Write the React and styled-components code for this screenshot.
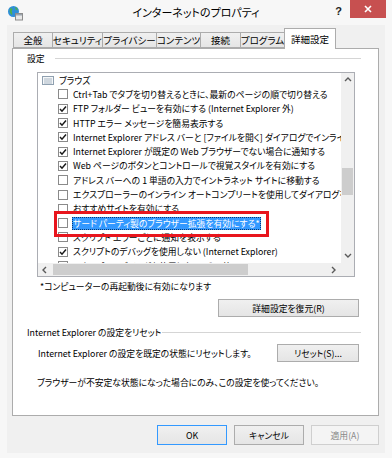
import React from "react";
import styled, { createGlobalStyle } from "styled-components";

const FONT = `"Noto Sans CJK JP", "Noto Sans", sans-serif`;

const Global = createGlobalStyle`
  html, body { margin: 0; padding: 0; background: #f7f7f7; }
  body {
    font-family: ${FONT};
    font-size: 8.8px;
    color: #000;
    font-feature-settings: "palt";
  }
  * { box-sizing: border-box; }
`;

const Window = styled.div`
  width: 392px;
  height: 458px;
  display: flex;
  flex-direction: column;
  background: #f7f7f7;
  overflow: hidden;
`;

const TitleBar = styled.div`
  height: 25px;
  flex: none;
  display: grid;
  grid-template-columns: 1fr auto 1fr;
  align-items: start;
`;

const IconSlot = styled.div`
  padding: 5px 0 0 7px;
  line-height: 0;
`;

const Title = styled.div`
  font-size: 11px;
  line-height: 25px;
`;

const Controls = styled.div`
  justify-self: end;
  display: flex;
  align-items: flex-start;
  margin-right: 6px;
`;

const Help = styled.div`
  font-family: "Liberation Sans", sans-serif;
  font-weight: bold;
  font-size: 11px;
  line-height: 11px;
  margin: 6px 8px 0 0;
  color: #222;
`;

const Close = styled.div`
  width: 36px;
  height: 18px;
  background: #c75050;
  display: flex;
  align-items: center;
  justify-content: center;
`;

const Client = styled.div`
  flex: 1;
  margin: 0 7px 5px 7px;
  background: #f0f0f0;
  padding: 3px 6px 0 5px;
  display: flex;
  flex-direction: column;
`;

const TabStrip = styled.div`
  display: flex;
  align-items: flex-end;
  height: 20px;
  padding-left: 1px;
  position: relative;
  z-index: 1;
`;

const Tab = styled.div`
  width: ${(p) => p.$w}px;
  height: ${(p) => (p.$active ? 21 : 16)}px;
  margin-left: ${(p) => (p.$first ? 0 : -1)}px;
  margin-bottom: ${(p) => (p.$active ? -1 : 0)}px;
  border: 1px solid #acacac;
  border-bottom: ${(p) => (p.$active ? "none" : "1px solid #acacac")};
  background: ${(p) =>
    p.$active ? "#fff" : "linear-gradient(#f0f0f0, #e5e5e5)"};
  display: flex;
  align-items: center;
  justify-content: center;
  padding-bottom: ${(p) => (p.$active ? 1 : 0)}px;
  white-space: nowrap;
  font-size: 9.5px;
  position: relative;
  z-index: ${(p) => (p.$active ? 2 : 1)};
`;

const Panel = styled.div`
  height: 368px;
  flex: none;
  background: #fff;
  border: 1px solid #acacac;
  display: flex;
  flex-direction: column;
`;

const GroupHeader = styled.div`
  display: flex;
  align-items: center;
  gap: ${(p) => p.$gap}px;
  height: 12px;
  margin: ${(p) => p.$mt}px 17px 0 14px;
  white-space: nowrap;
`;

const GroupLine = styled.div`
  flex: 1;
  height: 1px;
  background: #d5d5d5;
`;

const ListBox = styled.div`
  position: relative;
  margin: 8px 0 0 24px;
  width: 318px;
  height: 205px;
  border: 1px solid #abadb3;
  display: grid;
  grid-template-columns: 1fr 13px;
  grid-template-rows: 1fr 13px;
`;

const ListContent = styled.div`
  overflow: hidden;
`;

const Row = styled.div`
  height: 14.3px;
  display: flex;
  align-items: center;
  gap: 5px;
  padding-left: ${(p) => (p.$header ? 4 : 20)}px;
  white-space: nowrap;
`;

const Check = styled.div`
  width: 10px;
  height: 10px;
  flex: none;
  border: 1px solid #8a8a8a;
  background: #fff;
  display: flex;
  align-items: center;
  justify-content: center;
`;

const ItemText = styled.span`
  line-height: 13px;
  height: 13px;
  padding: 0 1px;
  margin-left: -1px;
  ${(p) =>
    p.$selected &&
    `
    background: #3399ff;
    color: #fff;
    outline: 1px dotted #0b3a70;
    outline-offset: -1px;
  `}
`;

const VScroll = styled.div`
  background: #f0f0f0;
  display: flex;
  flex-direction: column;
  align-items: center;
`;

const HScroll = styled.div`
  background: #f0f0f0;
  display: flex;
  align-items: center;
`;

const Corner = styled.div`
  background: #f0f0f0;
`;

const ArrowBox = styled.div`
  flex: none;
  width: ${(p) => (p.$h ? 14 : 13)}px;
  height: ${(p) => (p.$h ? 13 : 14)}px;
  display: flex;
  align-items: center;
  justify-content: center;
`;

const Track = styled.div`
  flex: 1;
  display: flex;
  flex-direction: ${(p) => (p.$h ? "row" : "column")};
  align-items: center;
`;

const VThumb = styled.div`
  width: 11px;
  height: ${(p) => p.$size}px;
  margin-top: ${(p) => p.$offset}px;
  background: #cdcdcd;
`;

const HThumb = styled.div`
  height: 11px;
  width: ${(p) => p.$size}px;
  margin-left: ${(p) => p.$offset}px;
  background: #cdcdcd;
`;

const Annotation = styled.div`
  position: absolute;
  left: 16px;
  top: 138px;
  width: 215px;
  height: 26px;
  border: 3px solid #e8151d;
  pointer-events: none;
`;

const Note = styled.div`
  margin: 4px 0 0 27px;
  line-height: 12px;
`;

const Button = styled.div`
  width: ${(p) => p.$w}px;
  height: ${(p) => p.$h || 18}px;
  flex: none;
  border: 1px solid
    ${(p) => (p.$default ? "#3399ff" : p.$disabled ? "#cfcfcf" : "#acacac")};
  background: ${(p) =>
    p.$disabled ? "#f4f4f4" : "linear-gradient(#f0f0f0, #e5e5e5)"};
  color: ${(p) => (p.$disabled ? "#8a8a8a" : "#000")};
  display: flex;
  align-items: center;
  justify-content: center;
  white-space: nowrap;
`;

const RestoreRow = styled.div`
  display: flex;
  justify-content: flex-end;
  margin: 6px 19px 0 0;
`;

const ResetRow = styled.div`
  display: flex;
  align-items: center;
  justify-content: space-between;
  margin: 6px 19px 0 25px;
`;

const Para = styled.div`
  margin: ${(p) => p.$mt}px 0 0 ${(p) => p.$ml}px;
  line-height: 12px;
  white-space: nowrap;
`;

const ButtonBar = styled.div`
  display: flex;
  justify-content: flex-end;
  gap: 7px;
  margin-top: 9px;
`;

const Chevron = ({ dir }) => {
  const pts = {
    up: "1,5 4,2 7,5",
    down: "1,2 4,5 7,2",
    left: "5,1 2,4 5,7",
    right: "2,1 5,4 2,7",
  }[dir];
  return (
    <svg width="8" height="8" viewBox="0 0 8 8">
      <polyline points={pts} fill="none" stroke="#5a5a5a" strokeWidth="1.4" />
    </svg>
  );
};

const AppIcon = () => (
  <svg width="16" height="16" viewBox="0 0 16 16">
    <circle cx="6.5" cy="6.5" r="5.5" fill="#2f8fd8" />
    <path d="M3 3.5 C5 2.5 6 4 5 5.5 C4 7 6 8 5 10 C3.5 9 2 7 3 3.5Z" fill="#4caf50" />
    <path d="M8 2 C10 2.5 11 4 10.5 5.5 C9 5 8 4 8 2Z" fill="#4caf50" />
    <rect x="8.5" y="8.5" width="7" height="6.5" fill="#e8e8e8" stroke="#8c8c8c" />
    <rect x="9" y="9" width="6" height="1.5" fill="#9aa4ad" />
  </svg>
);

const ListIcon = () => (
  <svg width="12" height="9" viewBox="0 0 12 9">
    <rect x="0.5" y="0.5" width="11" height="8" fill="#f5f7f9" stroke="#8fa0b0" />
    <line x1="2" y1="3" x2="10" y2="3" stroke="#a8b6c3" />
    <line x1="2" y1="5" x2="10" y2="5" stroke="#a8b6c3" />
    <line x1="2" y1="7" x2="10" y2="7" stroke="#a8b6c3" />
  </svg>
);

const CheckMark = () => (
  <svg width="8" height="8" viewBox="0 0 8 8">
    <polyline points="1,4 3,6.2 7,1.5" fill="none" stroke="#1a1a1a" strokeWidth="1.5" />
  </svg>
);

const tabs = [
  { label: "全般", w: 40 },
  { label: "セキュリティ", w: 51 },
  { label: "プライバシー", w: 55 },
  { label: "コンテンツ", w: 45 },
  { label: "接続", w: 41 },
  { label: "プログラム", w: 45 },
  { label: "詳細設定", w: 52, active: true },
];

const items = [
  { text: "Ctrl+Tab でタブを切り替えるときに、最新のページの順で切り替える", checked: false },
  { text: "FTP フォルダー ビューを有効にする (Internet Explorer 外)", checked: true },
  { text: "HTTP エラー メッセージを簡易表示する", checked: true },
  { text: "Internet Explorer アドレス バーと [ファイルを開く] ダイアログでインライン オートコンプリートを使用する", checked: true },
  { text: "Internet Explorer が既定の Web ブラウザーでない場合に通知する", checked: true },
  { text: "Web ページのボタンとコントロールで視覚スタイルを有効にする", checked: true },
  { text: "アドレス バーへの 1 単語の入力でイントラネット サイトに移動する", checked: false },
  { text: "エクスプローラーのインライン オートコンプリートを使用してダイアログを実行する", checked: false },
  { text: "おすすめサイトを有効にする", checked: false },
  { text: "サード パーティ製のブラウザー拡張を有効にする*", checked: false, selected: true },
  { text: "スクリプト エラーごとに通知を表示する", checked: false },
  { text: "スクリプトのデバッグを使用しない (Internet Explorer)", checked: true },
  { text: "スクリプトのデバッグを使用しない (その他)", checked: true },
];

export default function App() {
  return (
    <>
      <Global />
      <Window>
        <TitleBar>
          <IconSlot>
            <AppIcon />
          </IconSlot>
          <Title>インターネットのプロパティ</Title>
          <Controls>
            <Help>?</Help>
            <Close>
              <svg width="8" height="8" viewBox="0 0 8 8">
                <path d="M1 1 L7 7 M7 1 L1 7" stroke="#fff" strokeWidth="1.6" />
              </svg>
            </Close>
          </Controls>
        </TitleBar>
        <Client>
          <TabStrip>
            {tabs.map((t, i) => (
              <Tab key={t.label} $w={t.w} $active={t.active} $first={i === 0}>
                {t.label}
              </Tab>
            ))}
          </TabStrip>
          <Panel>
            <GroupHeader $mt={3} $gap={10}>
              <span>設定</span>
              <GroupLine />
            </GroupHeader>
            <ListBox>
              <ListContent>
                <Row $header>
                  <ListIcon />
                  <span>ブラウズ</span>
                </Row>
                {items.map((it) => (
                  <Row key={it.text}>
                    <Check>{it.checked && <CheckMark />}</Check>
                    <ItemText $selected={it.selected}>{it.text}</ItemText>
                  </Row>
                ))}
              </ListContent>
              <VScroll>
                <ArrowBox>
                  <Chevron dir="up" />
                </ArrowBox>
                <Track>
                  <VThumb $offset={81} $size={27} />
                </Track>
                <ArrowBox>
                  <Chevron dir="down" />
                </ArrowBox>
              </VScroll>
              <HScroll>
                <ArrowBox $h>
                  <Chevron dir="left" />
                </ArrowBox>
                <Track $h>
                  <HThumb $offset={1} $size={195} />
                </Track>
                <ArrowBox $h>
                  <Chevron dir="right" />
                </ArrowBox>
              </HScroll>
              <Corner />
              <Annotation />
            </ListBox>
            <Note>*コンピューターの再起動後に有効になります</Note>
            <RestoreRow>
              <Button $w={141}>詳細設定を復元(R)</Button>
            </RestoreRow>
            <GroupHeader $mt={9} $gap={1}>
              <span>Internet Explorer の設定をリセット</span>
              <GroupLine />
            </GroupHeader>
            <ResetRow>
              <span>Internet Explorer の設定を既定の状態にリセットします。</span>
              <Button $w={82}>リセット(S)...</Button>
            </ResetRow>
            <Para $mt={15} $ml={24}>
              ブラウザーが不安定な状態になった場合にのみ、この設定を使ってください。
            </Para>
          </Panel>
          <ButtonBar>
            <Button $w={70} $h={20} $default>
              OK
            </Button>
            <Button $w={70} $h={20}>
              キャンセル
            </Button>
            <Button $w={68} $h={20} $disabled>
              適用(A)
            </Button>
          </ButtonBar>
        </Client>
      </Window>
    </>
  );
}
